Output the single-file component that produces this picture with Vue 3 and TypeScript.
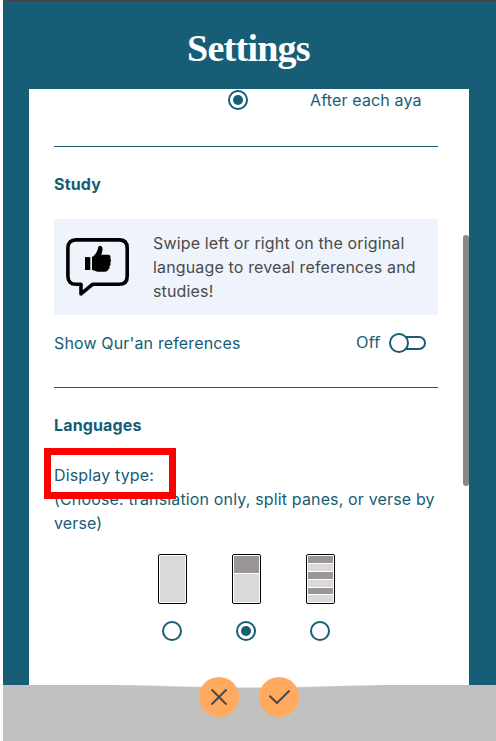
<script setup lang="ts">
import { ref } from 'vue'

interface DisplayOption {
  id: string
  label: string
  bands: { y: number; h: number; dark: boolean }[]
}

const displayOptions: DisplayOption[] = [
  { id: 'single', label: 'Translation only', bands: [{ y: 2, h: 46, dark: false }] },
  {
    id: 'split',
    label: 'Split panes',
    bands: [
      { y: 2, h: 17, dark: true },
      { y: 20, h: 28, dark: false },
    ],
  },
  {
    id: 'verse',
    label: 'Verse by verse',
    bands: [
      { y: 2, h: 7, dark: true },
      { y: 10, h: 7, dark: false },
      { y: 18, h: 7, dark: true },
      { y: 26, h: 7, dark: false },
      { y: 34, h: 6, dark: true },
      { y: 41, h: 7, dark: false },
    ],
  },
]

const display = ref('split')
const showReferences = ref(false)
</script>

<template>
  <div class="screen">
    <header class="header"><h1>Settings</h1></header>

    <main class="panel">
      <div class="audio-row">
        <span class="radio on"></span>
        <span class="audio-label">After each aya</span>
      </div>

      <section class="section study">
        <h2>Study</h2>
        <div class="hint">
          <svg class="hint-icon" width="64" height="60" viewBox="0 0 64 60">
            <path d="M10 1.900H53Q61.200 1.900 61.200 10V38.200Q61.200 46.300 53 46.300H26.500L15 55.800V46.300H10Q1.900 46.300 1.900 38.200V10Q1.900 1.900 10 1.900Z" fill="none" stroke="#000" stroke-width="3.600" stroke-linejoin="round" />
            <path transform="translate(0 -2.200)" d="M19 21.300H24.300V34.200H19Z" />
            <path transform="translate(0 -2.200)" d="M26 21.300C29 19.500 31 16.500 32 12.500C32.400 10.200 33.600 9.700 34.800 10.100C37 10.800 37 14 35.300 19H42.500C44.300 19.300 44.900 21 44.300 22.700C45.200 23.800 45.200 25.700 44.300 26.700C44.900 28 44.500 29.700 43.500 30.500C43.800 32 43.300 33.200 42.100 34C41.600 35.300 40.600 35.800 39 35.900C34 36.300 31 36 28.800 34.900L26 34.200Z" />
          </svg>
          <p>Swipe left or right on the original language to reveal references and studies!</p>
        </div>
        <div class="toggle-row">
          <span>Show Qur'an references</span>
          <span class="toggle" role="switch" :aria-checked="showReferences" @click="showReferences = !showReferences">
            <span class="toggle-text">{{ showReferences ? 'On' : 'Off' }}</span>
            <span class="switch" :class="{ active: showReferences }"><span class="knob"></span></span>
          </span>
        </div>
      </section>

      <section class="section languages">
        <h2>Languages</h2>
        <p class="description"><span class="display-label">Display type:<span class="highlight"></span></span><br />(Choose: translation only, split panes, or verse by verse)</p>
        <div class="options">
          <div v-for="option in displayOptions" :key="option.id" class="option" role="radio" :aria-label="option.label" :aria-checked="display === option.id" @click="display = option.id">
            <svg width="29" height="50" viewBox="0 0 29 50">
              <rect x=".5" y=".5" width="28" height="49" rx="1.500" fill="#fff" stroke="#000" />
              <rect v-for="band in option.bands" :key="band.y" x="2" :y="band.y" width="25" :height="band.h" :fill="band.dark ? '#9b9595' : '#d9d9d9'" />
            </svg>
            <span class="radio" :class="{ on: display === option.id }"></span>
          </div>
        </div>
      </section>
      <span class="scroll-thumb"></span>
    </main>

    <footer class="footer">
      <svg class="curve" width="290" height="4" viewBox="0 0 290 4">
        <path d="M0 0H290C235 .3 215 3 145 3S55 .3 0 0Z" fill="#e3e3e3" />
        <path d="M0 0H290C235 0 215 1.900 145 1.900S55 0 0 0Z" fill="#fff" />
      </svg>
      <button class="action" aria-label="Cancel">
        <svg width="40" height="40" viewBox="0 0 40 40"><path d="M12.500 12.500L27.500 27.500M27.500 12.500L12.500 27.500" /></svg>
      </button>
      <button class="action" aria-label="Confirm">
        <svg width="40" height="40" viewBox="0 0 40 40"><path d="M10.500 18.700L18 26L30.500 13.500" /></svg>
      </button>
    </footer>
  </div>
</template>

<style>
body { background: #fff; }
</style>

<style scoped>
* { box-sizing: border-box; }
.screen {
  width: 493px;
  height: 741px;
  margin-left: 3px;
  display: flex;
  flex-direction: column;
  overflow: hidden;
  border-top: 1px solid #444;
  background: #165d75;
  color: #165d75;
  font: 16px/24px Inter, "Liberation Sans", sans-serif;
  letter-spacing: 0.15px;
}
.header { flex: 0 0 88px; display: flex; justify-content: center; align-items: center; padding: 5px 2px 0 0; }
h1 { margin: 0; color: #fff; font: bold 38px/44px "Liberation Serif", serif; letter-spacing: -0.75px; }
.panel { position: relative; flex: 0 0 596px; width: 440px; margin-left: 26px; padding: 0 31px 0 25px; background: #fff; overflow: hidden; }
.audio-row { height: 58px; display: flex; align-items: flex-start; padding: 1px 0 0 174px; border-bottom: 1px solid #165d75; }
.audio-label { margin: -2px 0 0 62px; }
.radio { flex: none; width: 20px; height: 20px; display: flex; align-items: center; justify-content: center; border: 2px solid #165d75; border-radius: 50%; }
.radio.on::after { content: ""; width: 10px; height: 10px; border-radius: 50%; background: #165d75; }
h2 { margin: 0; font-size: 16px; line-height: 24px; font-weight: 700; }
.section { padding-top: 25px; }
.study { height: 241px; border-bottom: 1px solid #165d75; }
.hint { display: flex; height: 96px; margin-top: 23px; padding: 12px 0 0 12px; background: #eff4fc; color: #4a4a4a; }
.hint-icon { flex: none; margin-top: 7px; }
.hint p { width: 280px; margin: 0 0 0 23px; }
.toggle-row { display: flex; justify-content: space-between; align-items: center; margin-top: 16px; padding-right: 12px; }
.toggle { display: flex; align-items: center; gap: 9px; }
.toggle-text { padding-bottom: 2px; font: 16px/22px "Noto Sans", sans-serif; }
.switch { width: 37px; height: 20px; display: flex; align-items: center; position: relative; }
.switch::before { content: ""; box-sizing: border-box; width: 35px; height: 14px; margin-left: 2px; border: 2px solid #165d75; border-radius: 7px; }
.knob { position: absolute; left: 0; top: 0; width: 20px; height: 20px; border: 2px solid #165d75; border-radius: 50%; background: #fff; }
.switch.active .knob { left: 17px; }
.description { margin: 26px -3px 0 0; }
.display-label { position: relative; }
.highlight { position: absolute; left: -10px; top: -17px; width: 132px; height: 51px; border: 7px solid #f00; }
.options { display: flex; gap: 45px; margin: 19px 0 0 104px; }
.option { width: 29px; display: flex; flex-direction: column; align-items: flex-start; gap: 17px; }
.option .radio { margin-left: 4px; }
.scroll-thumb { position: absolute; right: 0; top: 146px; width: 6px; height: 251px; border-radius: 3px 3px 3px 3px; background: #888; }
.footer { position: relative; flex: 1; display: flex; align-items: flex-start; gap: 20px; padding-left: 196px; background: #c1c1c1; }
.curve { position: absolute; left: 102px; top: 0; }
.action { position: relative; width: 40px; height: 40px; margin-top: -8px; padding: 0; border: 0; border-radius: 50%; background: #ffaa5e; }
.action svg { display: block; fill: none; stroke: #4a4a4a; stroke-width: 2; }
</style>
